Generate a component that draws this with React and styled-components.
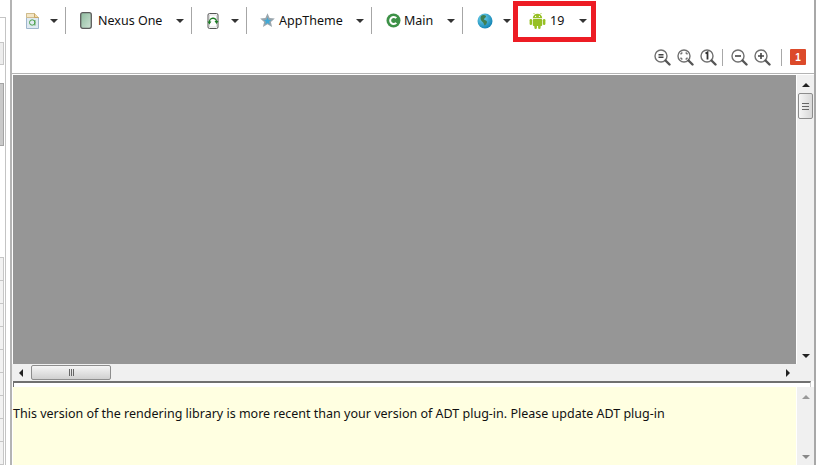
import React from 'react';
import styled, { createGlobalStyle } from 'styled-components';

const Global = createGlobalStyle`
  html, body { margin: 0; padding: 0; background: #fff; overflow: hidden; }
  * { box-sizing: border-box; }
`;
const Page = styled.div`
  position: relative; width: 820px; height: 465px; display: flex; background: #fff; overflow: hidden;
  font-family: "Noto Sans", "Liberation Sans", sans-serif; color: #111;
`;
const LeftStrip = styled.div`
  width: 10px; flex: none; display: flex; flex-direction: column; background: #fff;
`;
const LeftPanel = styled.div`
  margin-top: 17px; flex: 1; width: 6px; display: flex; flex-direction: column;
  border-top: 1px solid #c4c4c4; border-right: 1px solid #c4c4c4;
`;
const LeftGap = styled.div`
  height: ${p => p.$h}px; flex: none;
`;
const LeftCell = styled.div`
  width: 4px; height: ${p => p.$h}px; flex: none; border: 1px solid ${p => p.$line || '#c6c6c6'}; border-left: 0;
  margin-top: -1px; background: ${p => p.$bg || '#f2f2f2'};
`;
const Main = styled.div`
  width: 806px; flex: none; display: flex; flex-direction: column; border-left: 2px solid #b4b4b4; border-right: 2px solid #a8a8a8;
`;
const Toolbar = styled.div`
  height: 41px; flex: none; display: flex; align-items: center; padding-left: 14px;
`;
const Item = styled.div`
  width: ${p => p.$w}px; padding-left: ${p => p.$pl || 0}px; flex: none; display: flex; align-items: center; height: 100%;
`;
const Label = styled.span`
  font-size: 12.5px; margin-left: ${p => p.$ml || 7}px; white-space: nowrap;
`;
const Arrow = styled.i`
  display: block; margin-left: auto; margin-right: ${p => p.$mr ?? 7}px; width: 0; height: 0;
  border-left: 4px solid transparent; border-right: 4px solid transparent; border-top: 4px solid #333;
`;
const Icon = styled.svg`
  flex: none; display: block;
`;
const Sep = styled.div`
  width: 1px; height: 27px; flex: none; background: #a6a6a6; margin-right: ${p => p.$mr || 0}px;
`;
const ZoomBar = styled.div`
  height: 33px; flex: none; display: flex; align-items: center; padding-left: 642px;
  border-bottom: 1px solid #b4b4b4;
`;
const ZoomBtn = styled.svg`
  width: 17px; height: 17px; flex: none; margin-right: ${p => p.$mr ?? 6}px;
`;
const ZoomSep = styled.div`
  width: 1px; height: 17px; background: #a8a8a8; flex: none; margin-right: 8px;
`;
const Badge = styled.div`
  width: 16px; height: 16px; background: #dc4a2a; border-radius: 1px; color: #fff; font: bold 10px "Liberation Sans", sans-serif;
  display: flex; align-items: center; justify-content: center;
`;
const CanvasArea = styled.div`
  flex: none; height: 289px; margin-top: 1px; display: flex;
`;
const Canvas = styled.div`
  flex: 1; background: #969696; margin-left: 1px;
`;
const VScroll = styled.div`
  width: 18px; flex: none; background: #f0f0f0; display: flex; flex-direction: column; align-items: center;
  padding: 8px 0 6px; border-left: 1px solid #fff;
`;
const ArrowUp = styled.i`
  display: block; width: 0; height: 0; flex: none;
  border-left: 4px solid transparent; border-right: 4px solid transparent; border-bottom: 4px solid ${p => p.$c || '#222'};
`;
const ArrowDown = styled.i`
  display: block; width: 0; height: 0; flex: none; margin-top: auto;
  border-left: 4px solid transparent; border-right: 4px solid transparent; border-top: 4px solid ${p => p.$c || '#222'};
`;
const VThumb = styled.div`
  width: 15px; height: 26px; margin-top: 6px; flex: none; border: 1px solid #8d8d8d; border-radius: 2px;
  background: linear-gradient(90deg, #f5f5f5, #d8d8d8); display: flex; flex-direction: column; align-items: center; justify-content: center; gap: 2px;
`;
const Grip = styled.b`
  display: block; background: #666; width: ${p => p.$v ? '1px' : '7px'}; height: ${p => p.$v ? '7px' : '1px'};
`;
const HScroll = styled.div`
  height: 17px; flex: none; background: #f0f0f0; display: flex; align-items: center; padding-right: 24px;
`;
const ArrowLeft = styled.i`
  display: block; width: 0; height: 0; flex: none; margin-left: 7px;
  border-top: 4px solid transparent; border-bottom: 4px solid transparent; border-right: 4px solid #222;
`;
const ArrowRight = styled.i`
  display: block; width: 0; height: 0; flex: none; margin-left: auto;
  border-top: 4px solid transparent; border-bottom: 4px solid transparent; border-left: 4px solid #222;
`;
const HThumb = styled.div`
  width: 80px; height: 15px; margin-left: 8px; flex: none; border: 1px solid #8d8d8d; border-radius: 2px;
  background: linear-gradient(#f5f5f5, #d0d0d0); display: flex; align-items: center; justify-content: center; gap: 1px;
`;
const Sash = styled.div`
  height: 6px; flex: none; margin: 0 3px 0 1px; border-top: 2px solid #707070; background: #fff;
  border-left: 1px solid #707070; border-right: 1px solid #cfcfcf;
`;
const Bottom = styled.div`
  flex: 1; display: flex; min-height: 0;
`;
const Message = styled.div`
  flex: 1; margin-left: 1px; background: #ffffe1; font-size: 12.5px; padding-top: 18px; line-height: 17px; white-space: nowrap;
`;
const Callout = styled.div`
  position: absolute; left: 513px; top: 1px; width: 83px; height: 41px; border: 5px solid #ed1c24;
`;

const ZoomIcon = ({ children, mr }) => (
  <ZoomBtn viewBox="0 0 17 17" $mr={mr}>
    <circle cx="7" cy="7" r="6" fill="#fff" stroke="#707070" strokeWidth="1.400" />
    <path d="M11.500 11.500l4 4" stroke="#555" strokeWidth="2.400" strokeLinecap="round" />
    {children}
  </ZoomBtn>
);

const Android = () => (
  <Icon width="17" height="17" viewBox="0 0 17 17">
    <g fill="#97c024">
      <path d="M3.800 6.300a4.700 4.500 0 0 1 9.400 0z" />
      <rect x="3.800" y="7" width="9.400" height="7" rx="1" />
      <rect x=".6" y="7" width="2.500" height="6" rx="1.200" />
      <rect x="13.900" y="7" width="2.500" height="6" rx="1.200" />
      <rect x="5.400" y="13" width="2.500" height="4" rx="1.200" />
      <rect x="9.100" y="13" width="2.500" height="4" rx="1.200" />
    </g>
    <path d="M5.500 2.200L4.600 1M11.500 2.200L12.400 1" stroke="#97c024" strokeWidth=".8" />
    <circle cx="6.600" cy="4.400" r=".6" fill="#fff" />
    <circle cx="10.400" cy="4.400" r=".6" fill="#fff" />
  </Icon>
);

export default function App() {
  return (
    <Page>
      <Global />
      <LeftStrip>
        <LeftPanel>
          <LeftGap $h={25} />
          <LeftCell $h={23} $bg="#ededed" />
          <LeftGap $h={19} />
          <LeftCell $h={63} $bg="#c9c9c9" $line="#a4a4a4" />
          <LeftGap $h={112} />
          {Array.from({ length: 9 }, (_, i) => <LeftCell key={i} $h={24} />)}
        </LeftPanel>
      </LeftStrip>
      <Main>
        <Toolbar>
          <Item $w={39}>
            <Icon width="13" height="16" viewBox="0 0 13 16">
              <path d="M.5.5h8l4 4v11H.5z" fill="#dfeaf2" stroke="#9fb6cc" />
              <path d="M.5.5h8l4 4H.5z" fill="#f3e6c6" stroke="#d0bc8c" />
              <path d="M8.500.5v4h4" fill="#f3dca8" stroke="#c9a868" />
              <path d="M3.500 9.500a2.700 2.700 0 1 0 5.400 0a2.700 2.700 0 1 0-5.400 0M8.900 7v5.500" fill="none" stroke="#4aa04a" />
            </Icon>
            <Arrow />
          </Item>
          <Sep $mr={14} />
          <Item $w={111}>
            <Icon width="12" height="17" viewBox="0 0 12 17">
              <defs>
                <linearGradient id="ph" x1="0" y1="0" x2="1" y2="1">
                  <stop offset="0" stopColor="#8dbb9e" />
                  <stop offset="1" stopColor="#cfe3d5" />
                </linearGradient>
              </defs>
              <rect x=".7" y=".7" width="10.600" height="15.600" rx="2" fill="url(#ph)" stroke="#5c5c5c" strokeWidth="1.300" />
            </Icon>
            <Label $ml={6}>Nexus One</Label>
            <Arrow />
          </Item>
          <Sep $mr={15} />
          <Item $w={39}>
            <Icon width="12" height="16" viewBox="0 0 12 16">
              <rect x="1" y=".5" width="10" height="15" rx="1.500" fill="#fff" stroke="#555" />
              <rect x="2.500" y="2" width="7" height="12" fill="#fff" stroke="#bbb" strokeWidth=".5" />
              <path d="M2.500 9a3.500 3.500 0 0 1 7-.5" fill="none" stroke="#1d7d25" strokeWidth="1.300" />
              <path d="M.4 8.500h4L2.400 11.500zM7.500 8h4L9.500 11z" fill="#1d7d25" />
            </Icon>
            <Arrow />
          </Item>
          <Sep $mr={13} />
          <Item $w={111}>
            <Icon width="15" height="15" viewBox="0 0 15 15">
              <path d="M7.500.3l2.100 4.800 5.200.4-3.900 3.400 1.200 5.200-4.600-2.800-4.600 2.800 1.200-5.200L.2 5.500l5.200-.4z" fill="#9aa6ad" />
              <path d="M7.500 4.200l1 2.500 2.700.2-2 1.800.6 2.700-2.300-1.500-2.300 1.500.6-2.700-2-1.800 2.700-.2z" fill="#3fa9d6" />
            </Icon>
            <Label $ml={4}>AppTheme</Label>
            <Arrow />
          </Item>
          <Sep $mr={14} />
          <Item $w={76}>
            <Icon width="15" height="15" viewBox="0 0 15 15">
              <circle cx="7.500" cy="7.500" r="7" fill="#3d9147" />
              <path d="M10.300 5.200a3.500 3.500 0 1 0 0 4.600" fill="none" stroke="#fff" strokeWidth="2" />
            </Icon>
            <Label $ml={3}>Main</Label>
            <Arrow />
          </Item>
          <Sep $mr={14} />
          <Item $w={34}>
            <Icon width="16" height="16" viewBox="0 0 16 16">
              <defs>
                <radialGradient id="gl" cx=".35" cy=".3" r=".8">
                  <stop offset="0" stopColor="#6fd4ee" />
                  <stop offset="1" stopColor="#0b7cae" />
                </radialGradient>
              </defs>
              <circle cx="8" cy="8" r="7.500" fill="url(#gl)" />
              <path d="M4 3c2-1.500 4-1 5 0 .5 1.500-2 2-2 3.500 1 1 3 1 3 2.500s-1.500 3-2.500 3.500c-.5-1.500-1-3-2.500-4C3.500 7 3 5 4 3z" fill="#3f7f52" />
            </Icon>
            <Arrow $mr={0} />
          </Item>
          <Item $w={76} $pl={18}>
            <Android />
            <Label $ml={4}>19</Label>
            <Arrow $mr={0} />
          </Item>
        </Toolbar>
        <ZoomBar>
          <ZoomIcon>
            <path d="M4.500 5.700h5M4.500 8.300h5" stroke="#444" strokeWidth="1.400" />
          </ZoomIcon>
          <ZoomIcon>
            <path d="M4 5.500V4h1.500M8.500 4H10v1.500M10 8.500V10H8.500M5.500 10H4V8.500" stroke="#444" fill="none" />
          </ZoomIcon>
          <ZoomIcon mr={5}>
            <path d="M5.500 4.500l2-1.200V10.500" stroke="#333" strokeWidth="1.800" fill="none" />
          </ZoomIcon>
          <ZoomSep />
          <ZoomIcon>
            <path d="M4 7h6" stroke="#444" strokeWidth="1.600" />
          </ZoomIcon>
          <ZoomIcon mr={10}>
            <path d="M4 7h6M7 4v6" stroke="#444" strokeWidth="1.600" />
          </ZoomIcon>
          <ZoomSep />
          <Badge>1</Badge>
        </ZoomBar>
        <CanvasArea>
          <Canvas />
          <VScroll>
            <ArrowUp />
            <VThumb><Grip /><Grip /><Grip /></VThumb>
            <ArrowDown />
          </VScroll>
        </CanvasArea>
        <HScroll>
          <ArrowLeft />
          <HThumb><Grip $v /><Grip $v /><Grip $v /></HThumb>
          <ArrowRight />
        </HScroll>
        <Sash />
        <Bottom>
          <Message>This version of the rendering library is more recent than your version of ADT plug-in. Please update ADT plug-in</Message>
          <VScroll>
            <ArrowUp $c="#999" />
            <ArrowDown $c="#888" />
          </VScroll>
        </Bottom>
      </Main>
      <Callout />
    </Page>
  );
}
